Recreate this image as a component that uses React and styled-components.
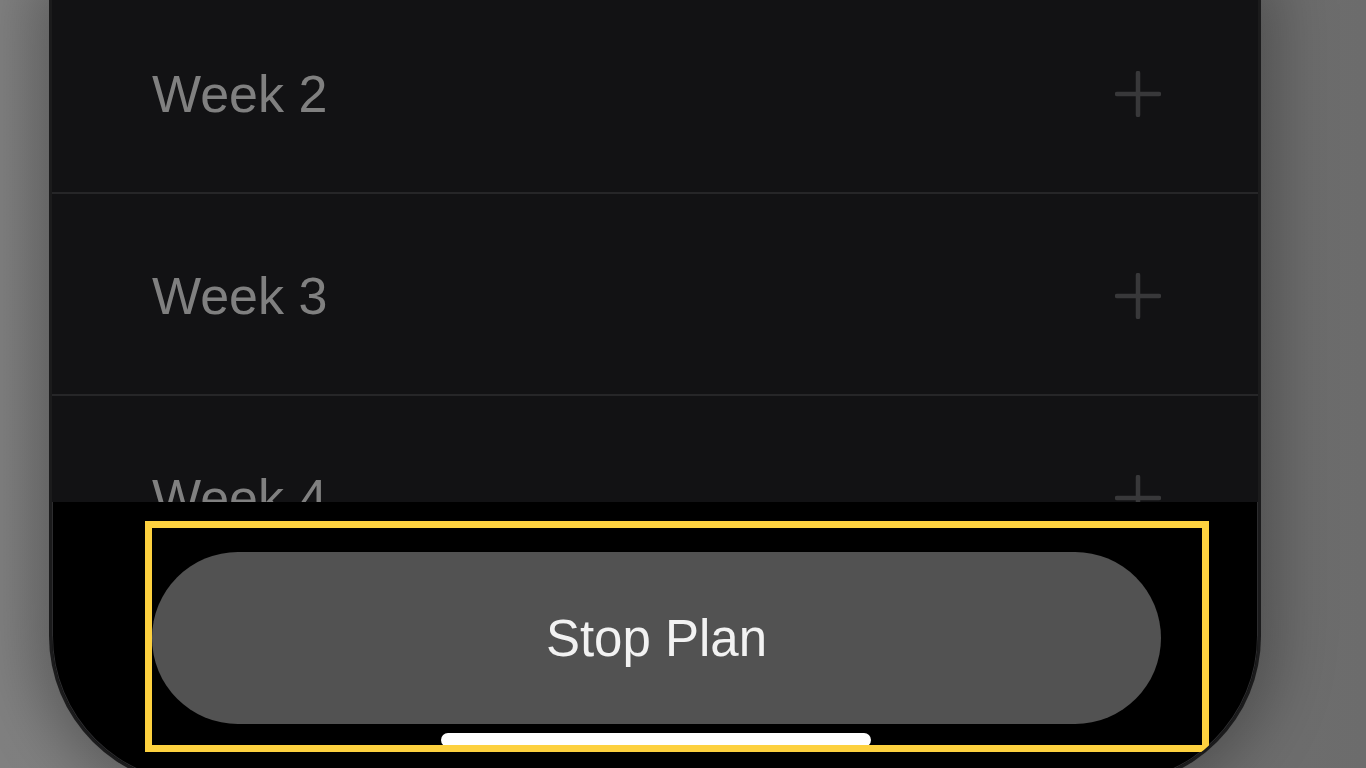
import React from 'react'
import styled, { createGlobalStyle } from 'styled-components'

const GlobalStyle = createGlobalStyle`
  html, body {
    margin: 0;
    padding: 0;
    background: #7d7d7d;
    font-family: "Liberation Sans", Arial, sans-serif;
  }
`

const Stage = styled.div`
  height: 768px;
  overflow: hidden;
  background: linear-gradient(90deg, #808080 0%, #6c6c6c 100%);
`

const Phone = styled.div`
  position: relative;
  margin: -8px 0 0 49px;
  width: 1212px;
  height: 794px;
  box-sizing: border-box;
  border: 3px solid #1b1b1c;
  border-top: none;
  border-radius: 0 0 150px 150px;
  background: #000;
  overflow: hidden;
  display: flex;
  flex-direction: column;
  box-shadow: 0 0 60px 16px rgba(0, 0, 0, 0.28), inset 0 0 0 1px #2d2d2f;
`

const List = styled.div`
  height: 510px;
  overflow: hidden;
  background: #121214;
  flex-shrink: 0;
`

const Row = styled.div`
  display: flex;
  align-items: center;
  justify-content: space-between;
  padding: 4px 97px 0 100px;
  height: 196px;
  border-bottom: 2px solid #262628;
`

const RowLabel = styled.span`
  font-size: 52px;
  color: #808080;
`

const PlusIcon = styled.svg`
  width: 46px;
  height: 46px;
  display: block;
`

const Footer = styled.div`
  position: relative;
  flex: 1;
  display: flex;
  flex-direction: column;
  align-items: center;
  padding: 50px 97px 0 100px;
`

const StopButton = styled.button`
  width: 100%;
  height: 172px;
  border: none;
  border-radius: 86px;
  background: #525252;
  color: #f2f2f2;
  font-family: "Liberation Sans", Arial, sans-serif;
  font-size: 51px;
  font-weight: 400;
  padding: 0;
  cursor: pointer;
`

const HomeIndicator = styled.div`
  margin-top: 9px;
  width: 430px;
  height: 14px;
  border-radius: 7px;
  background: #ffffff;
  transform: translateX(-1px);
`

const Highlight = styled.div`
  position: absolute;
  left: 93px;
  top: 19px;
  width: 1064px;
  height: 231px;
  box-sizing: border-box;
  border: 7px solid #fdd13f;
  pointer-events: none;
`

const weeks = ['Week 2', 'Week 3', 'Week 4', 'Week 5']

function Plus() {
  return (
    <PlusIcon viewBox="0 0 46 46">
      <path
        d="M23 2 V44 M2 23 H44"
        stroke="#38383a"
        strokeWidth="4.5"
        strokeLinecap="round"
        fill="none"
      />
    </PlusIcon>
  )
}

export default function App() {
  return (
    <>
      <GlobalStyle />
      <Stage>
        <Phone>
          <List>
            {weeks.map(w => (
              <Row key={w}>
                <RowLabel>{w}</RowLabel>
                <Plus />
              </Row>
            ))}
          </List>
          <Footer>
            <StopButton>Stop Plan</StopButton>
            <HomeIndicator />
            <Highlight />
          </Footer>
        </Phone>
      </Stage>
    </>
  )
}
